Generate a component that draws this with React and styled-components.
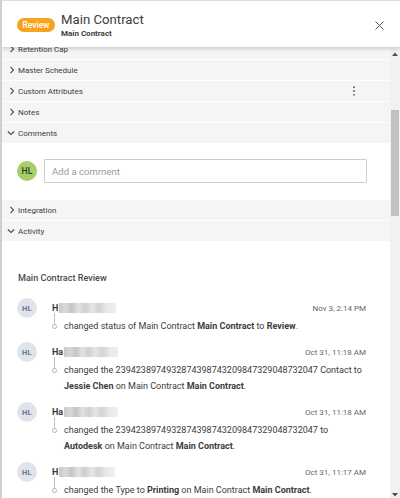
import React from "react";
import styled, { createGlobalStyle } from "styled-components";

const Global = createGlobalStyle`
  html, body { margin: 0; padding: 0; background: #fff; }
  body { width: 400px; height: 498px; overflow: hidden; font-family: Roboto, "Noto Sans", Arial, sans-serif; color: #3c3c3c; }
  * { box-sizing: border-box; }
`;

const Panel = styled.div`
  width: 400px;
  height: 498px;
  display: flex;
  flex-direction: column;
  border-left: 2px solid #cfcfcf;
  background: #fff;
  overflow: hidden;
`;

const Header = styled.header`
  height: 47px;
  flex: 0 0 47px;
  display: flex;
  align-items: center;
  padding: 0 16px 0 15px;
  border-top: 1px solid #dcdcdc;
  background: #fff;
  box-shadow: 0 2px 4px rgba(0, 0, 0, 0.16);
  position: relative;
  z-index: 2;
`;

const Badge = styled.span`
  display: inline-flex;
  align-items: center;
  justify-content: center;
  height: 14px;
  width: 38px;
  border-radius: 7px;
  background: #f9a21b;
  color: #fff;
  font-size: 8.5px;
  font-weight: 500;
  margin-top: 2px;
`;

const TitleBlock = styled.div`
  display: flex;
  flex-direction: column;
  margin-left: 6px;
  margin-top: 2px;
`;

const Title = styled.div`
  font-size: 13.2px;
  line-height: 16px;
  color: #3c3c3c;
`;

const Subtitle = styled.div`
  font-size: 8px;
  line-height: 11px;
  font-weight: 700;
  color: #3c3c3c;
`;

const Spacer = styled.div`
  flex: 1;
`;

const CloseButton = styled.button`
  border: 0;
  background: none;
  padding: 0;
  width: 10px;
  height: 10px;
  display: flex;
  align-items: center;
  justify-content: center;
  margin-top: 2px;
`;

const Body = styled.div`
  flex: 1;
  display: flex;
  min-height: 0;
`;

const Scroll = styled.div`
  flex: 1;
  overflow: hidden;
`;

const Content = styled.div`
  margin-top: -8px;
  display: flex;
  flex-direction: column;
  gap: 1px;
`;

const SectionRow = styled.div`
  height: 20px;
  background: #f5f5f5;
  display: flex;
  align-items: center;
  padding: 0 0 0 ${(p) => (p.$open ? "4px" : "5px")};
  font-size: 8px;
  color: #3c3c3c;
`;

const Chevron = styled.span`
  width: ${(p) => (p.$open ? "10px" : "9px")};
  height: 10px;
  display: flex;
  align-items: center;
  justify-content: center;
  margin-right: 2px;
`;

const Label = styled.span`
  flex: 1;
`;

const Kebab = styled.span`
  width: 4px;
  display: flex;
  justify-content: center;
  margin-right: 34px;
`;

const CommentArea = styled.div`
  background: #fff;
  display: flex;
  align-items: center;
  padding: 15px 23px 16px 15px;
  gap: 7px;
`;

const Avatar = styled.div`
  width: 20px;
  height: 20px;
  flex: 0 0 20px;
  border-radius: 50%;
  background: ${(p) => (p.$green ? "#a6cf6c" : "#dfe5eb")};
  color: ${(p) => (p.$green ? "#2f3a22" : "#6b7785")};
  font-size: ${(p) => (p.$green ? "8.5px" : "7.5px")};
  font-weight: ${(p) => (p.$green ? 500 : 700)};
  display: flex;
  align-items: center;
  justify-content: center;
  letter-spacing: 0.2px;
`;

const CommentInput = styled.div`
  flex: 1;
  height: 24px;
  border: 1px solid #cdcdcd;
  border-radius: 1px;
  display: flex;
  align-items: center;
  padding-left: 7px;
  font-size: 9.6px;
  color: #9a9a9a;
`;

const Activity = styled.div`
  background: #fff;
  padding: 30px 24px 0 15px;
`;

const ActivityTitle = styled.div`
  font-size: 9.1px;
  line-height: 12px;
  font-weight: 500;
  color: #4a4a4a;
  margin-bottom: 14px;
  padding-left: 1px;
`;

const Item = styled.div`
  margin-bottom: 8px;
`;

const ItemHead = styled.div`
  display: flex;
  align-items: center;
  height: 20px;
`;

const Name = styled.div`
  margin-left: 15px;
  display: flex;
  align-items: center;
  font-size: 9px;
  font-weight: 700;
  color: #3c3c3c;
  flex: 1;
`;

const Blur = styled.span`
  display: inline-block;
  width: ${(p) => p.$w}px;
  height: 10px;
  margin-left: 1px;
  background: linear-gradient(
    90deg,
    #c9c9c9 0%,
    #d9d9d9 12%,
    #c4c4c4 22%,
    #e2e2e2 34%,
    #cfcfcf 46%,
    #e6e6e6 58%,
    #d2d2d2 70%,
    #e9e9e9 84%,
    #f0f0f0 100%
  );
  filter: blur(0.6px);
`;

const DateText = styled.div`
  font-size: 8px;
  color: #666;
`;

const ItemBody = styled.div`
  display: flex;
  padding-left: 35px;
`;

const Connector = styled.div`
  width: 12px;
  flex: 0 0 12px;
  display: flex;
  flex-direction: column;
  align-items: flex-start;
  margin-top: -5px;
`;

const ConnectorLine = styled.div`
  width: 1px;
  height: 11px;
  margin-left: 2px;
  background: #b8c2cc;
`;

const ConnectorDot = styled.div`
  width: 5px;
  height: 5px;
  border-radius: 50%;
  border: 1px solid #a9b3bd;
  background: #fff;
`;

const ItemText = styled.div`
  font-size: 9px;
  line-height: 16px;
  color: #3c3c3c;
  flex: 1;
  b { font-weight: 700; }
`;

const ScrollBar = styled.div`
  width: 10px;
  flex: 0 0 10px;
  background: #f1f1f1;
  display: flex;
  flex-direction: column;
`;

const ArrowBtn = styled.div`
  height: ${(p) => p.$h}px;
  display: flex;
  justify-content: center;
  align-items: ${(p) => (p.$down ? "flex-end" : "center")};
  padding-bottom: ${(p) => (p.$down ? "1px" : "0")};
`;

const Track = styled.div`
  flex: 1;
  padding: 0 1px;
`;

const Thumb = styled.div`
  margin-top: ${(p) => p.$top}px;
  height: ${(p) => p.$h}px;
  background: #c1c1c1;
`;

const ChevronIcon = ({ open }) =>
  open ? (
    <svg width="8" height="6" viewBox="0 0 8 6">
      <polyline points="0.8,1.5 4,4.5 7.2,1.5" fill="none" stroke="#4a4a4a" strokeWidth="1.1" />
    </svg>
  ) : (
    <svg width="6" height="8" viewBox="0 0 6 8">
      <polyline points="1.5,0.8 4.5,4 1.5,7.2" fill="none" stroke="#4a4a4a" strokeWidth="1.1" />
    </svg>
  );

const Section = ({ label, open, menu }) => (
  <SectionRow $open={open}>
    <Chevron $open={open}>
      <ChevronIcon open={open} />
    </Chevron>
    <Label>{label}</Label>
    {menu && (
      <Kebab>
        <svg width="2" height="10" viewBox="0 0 2 10">
          <circle cx="1" cy="1.2" r="0.9" fill="#555" />
          <circle cx="1" cy="5" r="0.9" fill="#555" />
          <circle cx="1" cy="8.8" r="0.9" fill="#555" />
        </svg>
      </Kebab>
    )}
  </SectionRow>
);

const activities = [
  {
    initial: "H",
    blur: 57,
    date: "Nov 3, 2:14 PM",
    text: (
      <>
        changed status of Main Contract <b>Main Contract</b> to <b>Review</b>.
      </>
    ),
  },
  {
    initial: "Ha",
    blur: 54,
    date: "Oct 31, 11:18 AM",
    text: (
      <>
        changed the 2394238974932874398743209847329048732047 Contact to <b>Jessie Chen</b> on Main
        Contract <b>Main Contract</b>.
      </>
    ),
  },
  {
    initial: "Ha",
    blur: 54,
    date: "Oct 31, 11:18 AM",
    text: (
      <>
        changed the 2394238974932874398743209847329048732047 to <b>Autodesk</b> on Main Contract{" "}
        <b>Main Contract</b>.
      </>
    ),
  },
  {
    initial: "H",
    blur: 56,
    date: "Oct 31, 11:17 AM",
    text: (
      <>
        changed the Type to <b>Printing</b> on Main Contract <b>Main Contract</b>.
      </>
    ),
  },
];

export default function App() {
  return (
    <>
      <Global />
      <Panel>
        <Header>
          <Badge>Review</Badge>
          <TitleBlock>
            <Title>Main Contract</Title>
            <Subtitle>Main Contract</Subtitle>
          </TitleBlock>
          <Spacer />
          <CloseButton aria-label="Close">
            <svg width="9" height="9" viewBox="0 0 9 9">
              <path d="M0.5 0.5 L8.5 8.5 M8.5 0.5 L0.5 8.5" stroke="#555" strokeWidth="1" />
            </svg>
          </CloseButton>
        </Header>
        <Body>
          <Scroll>
            <Content>
              <Section label="Retention Cap" />
              <Section label="Master Schedule" />
              <Section label="Custom Attributes" menu />
              <Section label="Notes" />
              <Section label="Comments" open />
              <CommentArea>
                <Avatar $green>HL</Avatar>
                <CommentInput>Add a comment</CommentInput>
              </CommentArea>
              <Section label="Integration" />
              <Section label="Activity" open />
              <Activity>
                <ActivityTitle>Main Contract Review</ActivityTitle>
                {activities.map((a, i) => (
                  <Item key={i}>
                    <ItemHead>
                      <Avatar>HL</Avatar>
                      <Name>
                        {a.initial}
                        <Blur $w={a.blur} />
                      </Name>
                      <DateText>{a.date}</DateText>
                    </ItemHead>
                    <ItemBody>
                      <Connector>
                        <ConnectorLine />
                        <ConnectorDot />
                      </Connector>
                      <ItemText>{a.text}</ItemText>
                    </ItemBody>
                  </Item>
                ))}
              </Activity>
            </Content>
          </Scroll>
          <ScrollBar>
            <ArrowBtn $h={14}>
              <svg width="6" height="4" viewBox="0 0 6 4">
                <polygon points="0,4 3,0.5 6,4" fill="#505050" />
              </svg>
            </ArrowBtn>
            <Track>
              <Thumb $top={49} $h={106} />
            </Track>
            <ArrowBtn $h={10} $down>
              <svg width="6" height="4" viewBox="0 0 6 4">
                <polygon points="0,0 3,3.5 6,0" fill="#505050" />
              </svg>
            </ArrowBtn>
          </ScrollBar>
        </Body>
      </Panel>
    </>
  );
}
